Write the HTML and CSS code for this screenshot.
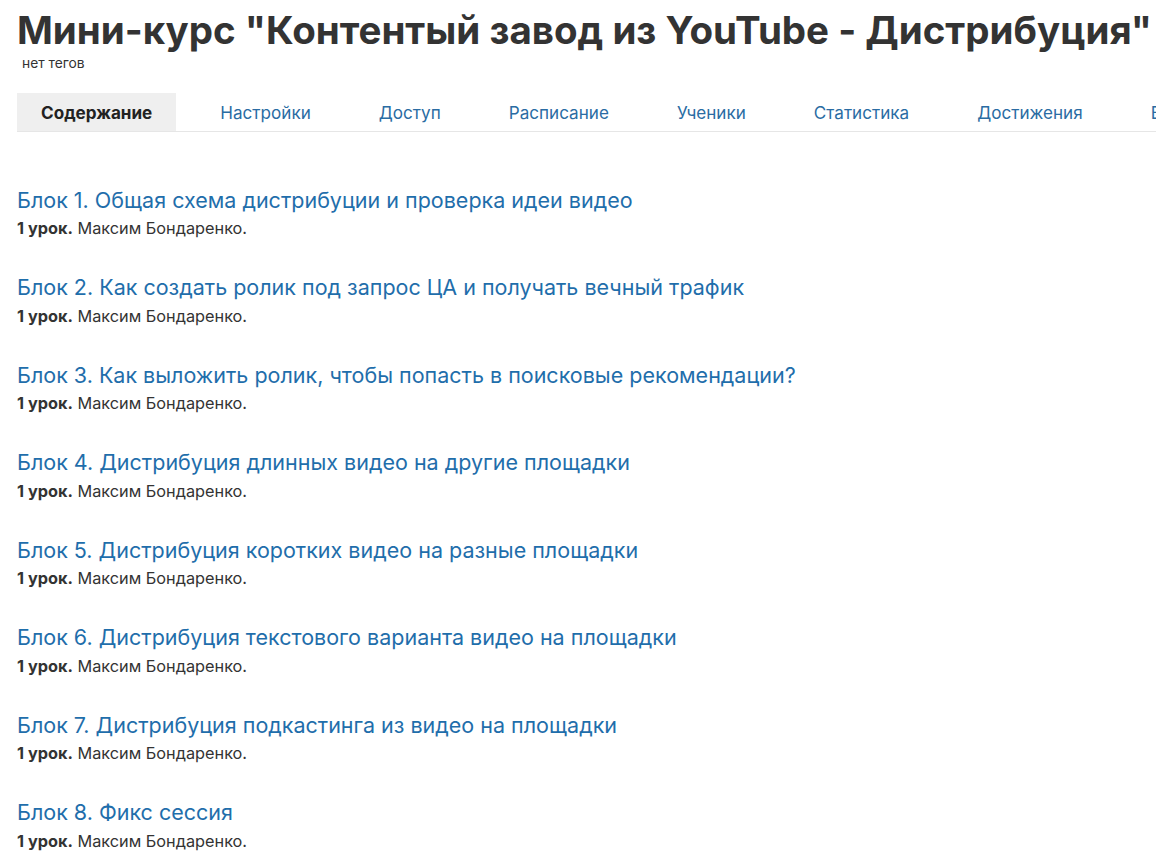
FILE: index.html
```html
<!DOCTYPE html>
<html lang="ru">
<head>
<meta charset="utf-8">
<link rel="stylesheet" href="styles.css">
</head>
<body>
<div class="page">
  <h1 class="title">Мини-курс "Контентый завод из YouTube - Дистрибуция"</h1>
  <div class="tags">нет тегов</div>
  <nav class="tabs">
    <span class="tab active">Содержание</span>
    <a class="tab">Настройки</a>
    <a class="tab">Доступ</a>
    <a class="tab">Расписание</a>
    <a class="tab">Ученики</a>
    <a class="tab">Статистика</a>
    <a class="tab">Достижения</a>
    <a class="tab">Воронки</a>
  </nav>
  <ul class="blocks">
    <li class="block"><a class="block-title">Блок 1. Общая схема дистрибуции и проверка идеи видео</a><div class="meta"><b>1 урок.</b> Максим Бондаренко.</div></li>
    <li class="block"><a class="block-title">Блок 2. Как создать ролик под запрос ЦА и получать вечный трафик</a><div class="meta"><b>1 урок.</b> Максим Бондаренко.</div></li>
    <li class="block"><a class="block-title">Блок 3. Как выложить ролик, чтобы попасть в поисковые рекомендации?</a><div class="meta"><b>1 урок.</b> Максим Бондаренко.</div></li>
    <li class="block"><a class="block-title">Блок 4. Дистрибуция длинных видео на другие площадки</a><div class="meta"><b>1 урок.</b> Максим Бондаренко.</div></li>
    <li class="block"><a class="block-title">Блок 5. Дистрибуция коротких видео на разные площадки</a><div class="meta"><b>1 урок.</b> Максим Бондаренко.</div></li>
    <li class="block"><a class="block-title">Блок 6. Дистрибуция текстового варианта видео на площадки</a><div class="meta"><b>1 урок.</b> Максим Бондаренко.</div></li>
    <li class="block"><a class="block-title">Блок 7. Дистрибуция подкастинга из видео на площадки</a><div class="meta"><b>1 урок.</b> Максим Бондаренко.</div></li>
    <li class="block"><a class="block-title">Блок 8. Фикс сессия</a><div class="meta"><b>1 урок.</b> Максим Бондаренко.</div></li>
  </ul>
</div>
</body>
</html>
```
FILE: styles.css
```css
html, body {
  margin: 0;
  padding: 0;
  background: #fff;
  overflow: hidden;
}
body {
  font-family: Inter, "Noto Sans", sans-serif;
  color: #333;
}
.page {
  padding: 0 0 0 17px;
  width: 1200px;
}
.title {
  margin: 0;
  padding-top: 5px;
  font-size: 38.5px;
  line-height: 50px;
  font-weight: 700;
  color: #333;
  white-space: nowrap;
}
.tags {
  margin: 0 0 0 5px;
  font-size: 13.8px;
  line-height: 16px;
  color: #333;
}
.tabs {
  margin-top: 22px;
  display: flex;
  gap: 20px;
  border-bottom: 1px solid #e6e6e6;
  white-space: nowrap;
}
.tab {
  display: block;
  padding: 1px 24px 0;
  height: 37px;
  line-height: 38px;
  font-size: 17.1px;
  color: #2a6ca3;
}
.tab.active {
  background: #efefef;
  color: #222;
  font-weight: 700;
}
.blocks {
  list-style: none;
  margin: 53.5px 0 0 0;
  padding: 0;
}
.block {
  height: 87.5px;
}
.block-title {
  display: block;
  font-size: 21.5px;
  line-height: 28px;
  color: #1f6eab;
}
.meta {
  font-size: 16.3px;
  line-height: 22px;
  margin-top: 3.5px;
  color: #333;
}
.meta b {
  font-weight: 700;
}
```
